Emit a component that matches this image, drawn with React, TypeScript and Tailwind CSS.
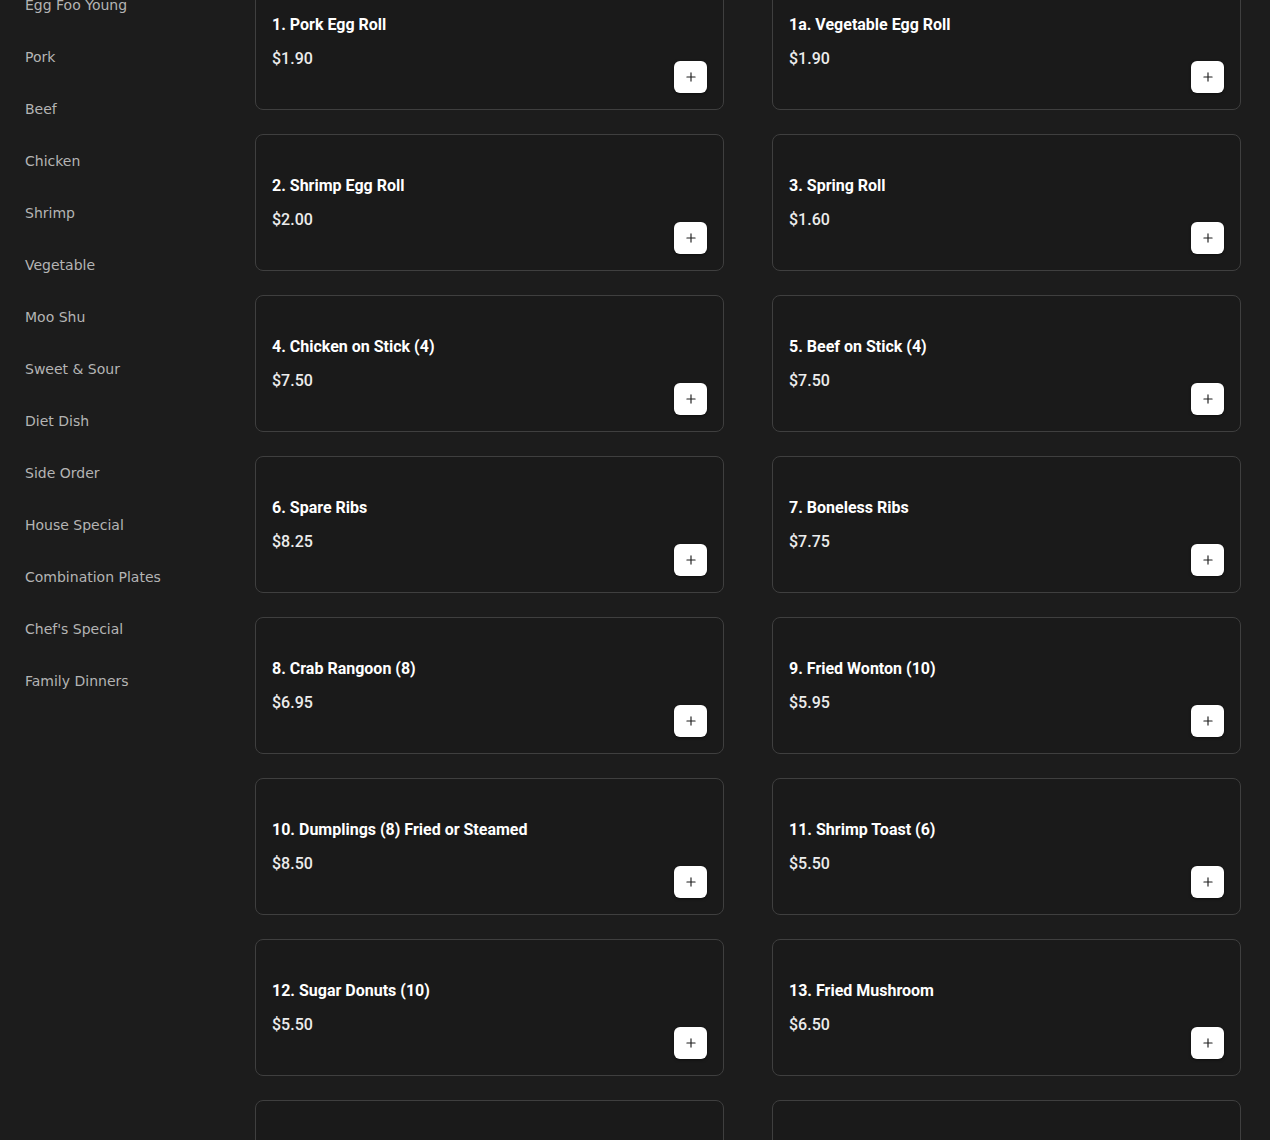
import { Plus } from "lucide-react";

const categories = [
  "Egg Foo Young",
  "Pork",
  "Beef",
  "Chicken",
  "Shrimp",
  "Vegetable",
  "Moo Shu",
  "Sweet & Sour",
  "Diet Dish",
  "Side Order",
  "House Special",
  "Combination Plates",
  "Chef's Special",
  "Family Dinners",
];

const items = [
  { name: "1. Pork Egg Roll", price: "$1.90" },
  { name: "1a. Vegetable Egg Roll", price: "$1.90" },
  { name: "2. Shrimp Egg Roll", price: "$2.00" },
  { name: "3. Spring Roll", price: "$1.60" },
  { name: "4. Chicken on Stick (4)", price: "$7.50" },
  { name: "5. Beef on Stick (4)", price: "$7.50" },
  { name: "6. Spare Ribs", price: "$8.25" },
  { name: "7. Boneless Ribs", price: "$7.75" },
  { name: "8. Crab Rangoon (8)", price: "$6.95" },
  { name: "9. Fried Wonton (10)", price: "$5.95" },
  { name: "10. Dumplings (8) Fried or Steamed", price: "$8.50" },
  { name: "11. Shrimp Toast (6)", price: "$5.50" },
  { name: "12. Sugar Donuts (10)", price: "$5.50" },
  { name: "13. Fried Mushroom", price: "$6.50" },
];

function MenuCard({ name, price }: { name: string; price: string }) {
  return (
    <div className="flex h-[137px] items-center rounded-lg border border-[#3f3f3f] bg-[#1a1a1a] p-4">
      <div className="flex flex-1 flex-col gap-2.5">
        <span className="text-base leading-6 font-bold text-white">{name}</span>
        <span className="text-base leading-6 font-medium text-[#ececec]">{price}</span>
      </div>
      {/* Add button */}
      <button className="flex h-8 w-[33px] items-center justify-center self-end rounded-md bg-white text-[#1f1f1f] shadow-[0_1px_3px_rgba(0,0,0,0.5)]">
        <Plus size={14} strokeWidth={2} />
      </button>
    </div>
  );
}

export default function App() {
  return (
    <div className="flex h-[1140px] w-full overflow-hidden bg-[#1c1c1c] font-['Roboto',sans-serif]">
      {/* Category sidebar */}
      <nav className="-mt-[21px] flex w-[225px] shrink-0 flex-col pl-[25px] font-['DejaVu_Sans',sans-serif]">
        {categories.map((c) => (
          <span key={c} className="py-4 text-sm leading-5 text-[#b4b4b4]">
            {c}
          </span>
        ))}
      </nav>

      {/* Menu grid */}
      <main className="-mt-[27px] grid flex-1 grid-cols-2 content-start gap-x-12 gap-y-6 pr-[29px] pl-[30px]">
        {items.map((it) => (
          <MenuCard key={it.name} name={it.name} price={it.price} />
        ))}
        {/* next row, only its top shows */}
        <div className="h-[137px] rounded-lg border border-[#3f3f3f] bg-[#1a1a1a]" />
        <div className="h-[137px] rounded-lg border border-[#3f3f3f] bg-[#1a1a1a]" />
      </main>
    </div>
  );
}
